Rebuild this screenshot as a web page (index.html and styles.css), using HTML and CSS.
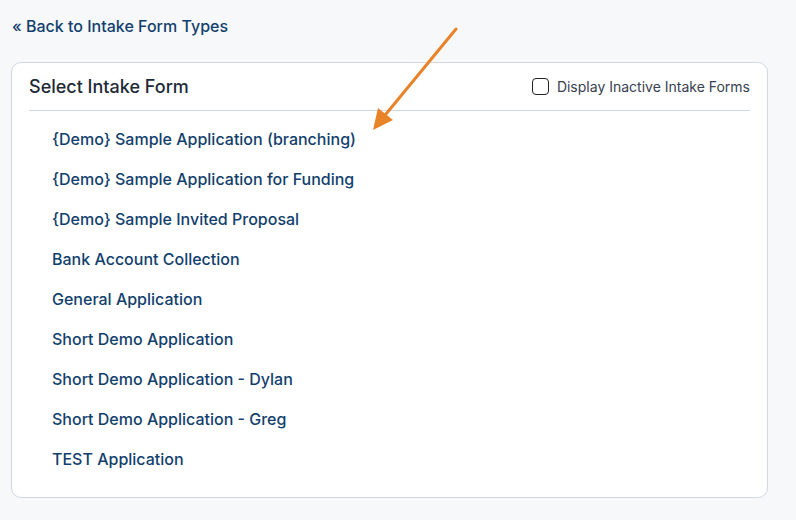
FILE: index.html
```html
<!DOCTYPE html>
<html lang="en">
<head>
  <meta charset="UTF-8">
  <title>Select Intake Form</title>
  <link rel="stylesheet" href="styles.css">
</head>
<body>
  <div class="page">
    <a href="#" class="back-link">&laquo; Back to Intake Form Types</a>

    <div class="card">
      <!-- ===== HEADER ===== -->
      <div class="card-header">
        <h2 class="card-title">Select Intake Form</h2>
        <label class="inactive-toggle">
          <input type="checkbox">
          <span>Display Inactive Intake Forms</span>
        </label>
      </div>

      <!-- ===== FORM LIST ===== -->
      <ul class="form-list">
        <li><a href="#">{Demo} Sample Application (branching)</a></li>
        <li><a href="#">{Demo} Sample Application for Funding</a></li>
        <li><a href="#">{Demo} Sample Invited Proposal</a></li>
        <li><a href="#">Bank Account Collection</a></li>
        <li><a href="#">General Application</a></li>
        <li><a href="#">Short Demo Application</a></li>
        <li><a href="#">Short Demo Application - Dylan</a></li>
        <li><a href="#">Short Demo Application - Greg</a></li>
        <li><a href="#">TEST Application</a></li>
      </ul>
    </div>
  </div>

  <!-- ===== ANNOTATION ARROW ===== -->
  <svg class="annotation" width="796" height="520" viewBox="0 0 796 520">
    <line x1="456" y1="29" x2="386" y2="114" stroke="#e8832a" stroke-width="3" stroke-linecap="round" />
    <polygon points="373,130 378,108 393,120" fill="#e8832a" />
  </svg>
</body>
</html>
```

FILE: styles.css
```css
html, body {
  margin: 0; padding: 0;
  background: #f7f8fa;
  font-family: Inter, "Noto Sans", sans-serif;
  color: #1f2937;
}

.page { padding: 15px 11px 0 11px; width: 757px; }

/* ---------------- Back link ---------------- */
.back-link {
  display: inline-block;
  margin-left: 1px;
  font-size: 16px;
  line-height: 22px;
  font-weight: 500;
  color: #123f6d;
  text-decoration: none;
}

/* ---------------- Card ---------------- */
.card {
  margin-top: 25px;
  background: #fff;
  border: 1px solid #cfd8e3;
  border-radius: 10px;
  padding: 0 17px 18px 17px;
}

.card-header {
  display: flex;
  align-items: center;
  justify-content: space-between;
  height: 47px;
  border-bottom: 1px solid #cfd8e3;
}
.card-title {
  margin: 0;
  font-size: 18px;
  font-weight: 500;
  color: #1e2a36;
}

.inactive-toggle {
  display: flex;
  align-items: center;
  gap: 8px;
  font-size: 14px;
  color: #374151;
}
.inactive-toggle input {
  appearance: none;
  margin: 0;
  width: 17px; height: 17px;
  border: 1.5px solid #222;
  border-radius: 4px;
  background: #fff;
}

/* ---------------- List ---------------- */
.form-list {
  list-style: none;
  margin: 0;
  padding: 8px 0 0 23px;
}
.form-list li { line-height: 40px; }
.form-list a {
  font-size: 16px;
  font-weight: 500;
  color: #123f6d;
  text-decoration: none;
}

/* ---------------- Annotation ---------------- */
.annotation { position: absolute; top: 0; left: 0; pointer-events: none; }
```
